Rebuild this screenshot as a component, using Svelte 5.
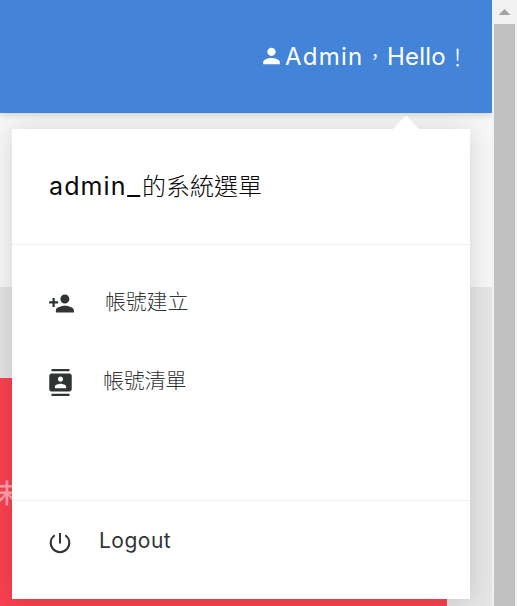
<script>
  const items = [
    { icon: 'add', label: '帳號建立' },
    { icon: 'contacts', label: '帳號清單' }
  ];
</script>

<div class="window">
  <div class="page">
    <header>
      <svg class="person" viewBox="0 0 24 24"><path d="M12 12c2.21 0 4-1.79 4-4s-1.79-4-4-4-4 1.79-4 4 1.79 4 4 4zm0 2c-2.67 0-8 1.34-8 4v2h16v-2c0-2.66-5.33-4-8-4z" /></svg>
      <div class="greeting"><span class="name">Admin</span><span class="cjk comma">，</span><span class="hello">Hello</span><span class="cjk bang">！</span></div>
    </header>
    <div class="backdrop">
      <div class="pale"></div>
      <div class="grey"></div>
      <div class="red"><span>末</span></div>
    </div>

    <div class="menu">
      <div class="arrow"></div>
      <div class="title"><span class="latin">admin<span class="under">_</span></span><span class="han">的系統選單</span></div>
      <nav>
        {#each items as item}
          <div class="item {item.icon}">
            <svg viewBox="0 0 24 24">
              {#if item.icon === 'add'}
                <path d="M15 12c2.21 0 4-1.79 4-4s-1.79-4-4-4-4 1.79-4 4 1.79 4 4 4zm-9-2V7H4v3H1v2h3v3h2v-3h3v-2H6zm9 4c-2.67 0-8 1.34-8 4v2h16v-2c0-2.66-5.33-4-8-4z" />
              {:else}
                <path d="M20 0H4v2h16V0zM4 24h16v-2H4v2zM20 4H4c-1.1 0-2 .9-2 2v12c0 1.1.9 2 2 2h16c1.1 0 2-.9 2-2V6c0-1.1-.9-2-2-2zm-8 2.75c1.24 0 2.25 1.01 2.25 2.25s-1.01 2.25-2.25 2.25S9.75 10.24 9.75 9 10.76 6.75 12 6.75zM17 17H7v-1.5c0-1.67 3.33-2.5 5-2.5s5 .83 5 2.5V17z" />
              {/if}
            </svg>
            <span>{item.label}</span>
          </div>
        {/each}
      </nav>
      <div class="logout">
        <svg viewBox="0 0 22 22"><path d="M11 1v10.500M5.700 3.200a9.300 9.300 0 1 0 10.600 0" /></svg>
        <span>Logout</span>
      </div>
    </div>
  </div>
  <div class="scrollbar">
    <div class="up"></div>
    <div class="thumb"></div>
  </div>
</div>

<style>
  :global(body) { margin: 0; overflow: hidden; }
  .window {
    width: 517px; height: 606px; display: flex; overflow: hidden; background: #f1f1f1;
    font-family: Inter, "Noto Sans CJK TC", sans-serif;
  }
  .page { position: relative; width: 492px; height: 606px; overflow: hidden; display: flex; flex-direction: column; }
  header {
    height: 113px; flex: none; box-sizing: border-box; background: #4384d8; color: #fff;
    display: flex; align-items: flex-start; padding: 43px 0 0 259px;
    box-shadow: 0 2px 7px rgba(0, 0, 0, .15); z-index: 1;
  }
  .person { width: 25px; height: 26px; fill: #fff; flex: none; }
  .greeting { display: flex; margin-left: 1px; font-size: 24px; line-height: 28px; white-space: nowrap; }
  .name { width: 78px; letter-spacing: 1.2px; }
  .hello { width: 59px; letter-spacing: .2px; }
  .cjk { width: 24px; font-family: "Noto Sans CJK TC", sans-serif; }
  .comma { font-size: 17px; line-height: 26px; text-align: center; }
  .bang { font-size: 23px; line-height: 26px; font-weight: 300; }
  .backdrop { flex: 1; display: flex; flex-direction: column; background: linear-gradient(90deg, #e4e4e4, #e6e6e6); }
  .pale { height: 174px; background: #f7f7f7; }
  .grey { height: 91px; }
  .red { width: 447px; height: 228px; background: #fb4150; overflow: hidden; }
  .red span { display: block; margin: 98px 0 0 -6px; font: 500 26px/32px "Noto Sans CJK TC", sans-serif; color: #ffa0a8; }
  .menu {
    position: absolute; z-index: 2; left: 12px; top: 129px; width: 458px; height: 470px;
    background: #fff; box-shadow: 0 2px 26px rgba(0, 0, 0, .15); display: flex; flex-direction: column;
  }
  .arrow {
    position: absolute; left: 380px; top: -13px; width: 28px; height: 14px;
    background: #fff; clip-path: polygon(0 100%, 46% 3%, 54% 3%, 100% 100%);
  }
  .title {
    height: 116px; box-sizing: border-box; border-bottom: 1px solid #f0f0f0;
    padding: 40px 0 0 37px; display: flex; font-size: 25px; line-height: 34px; color: #080808;
  }
  .latin { width: 93px; letter-spacing: 1.1px; white-space: nowrap; }
  .under { display: inline-block; letter-spacing: 0; transform: scaleX(1.15); transform-origin: left; }
  .han { font: 300 24px/32px "Noto Sans CJK TC", sans-serif; }
  nav {
    height: 256px; box-sizing: border-box; border-bottom: 1px solid #f0f0f0;
    padding: 37px 0 0 35px; display: flex; flex-direction: column; color: #303435;
  }
  .item { height: 79px; display: flex; align-items: flex-start; }
  .item svg { width: 27px; height: 27px; fill: #303435; margin-top: 8px; flex: none; }
  .item.add svg { margin-left: 1px; }
  .item span { font: 300 21px/37px "Noto Sans CJK TC", sans-serif; letter-spacing: -.2px; margin-left: 30px; }
  .item.contacts span { margin-left: 29px; }
  .logout { flex: 1; display: flex; align-items: flex-start; padding: 24px 0 0 37px; color: #303435; }
  .logout svg { width: 22px; height: 22px; margin-top: 7px; fill: none; stroke: #303435; stroke-width: 2; }
  .logout span { margin-left: 28px; font-size: 21px; line-height: 32px; letter-spacing: .5px; }
  .scrollbar { width: 25px; display: flex; flex-direction: column; align-items: center; background: #f1f1f1; }
  .up { width: 12px; height: 6px; margin: 9px 0; background: #a3a3a3; clip-path: polygon(50% 0, 100% 100%, 0 100%); }
  .thumb { flex: 1; width: 21px; margin-right: 1px; background: #c1c1c1; }
</style>
